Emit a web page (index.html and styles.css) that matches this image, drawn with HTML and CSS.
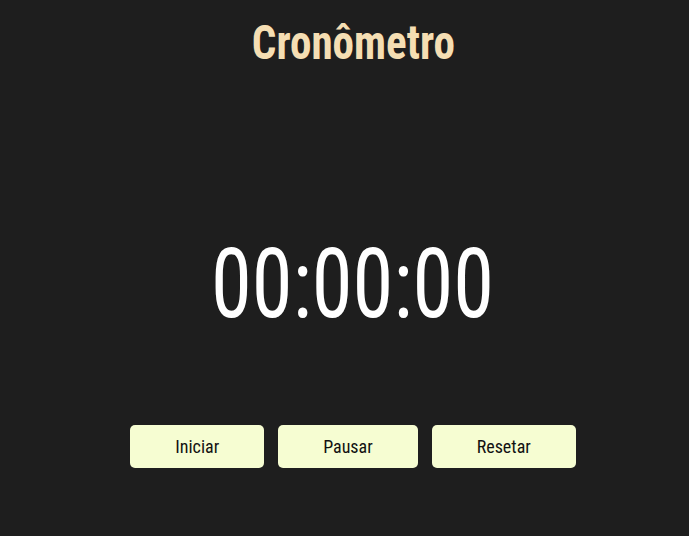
FILE: index.html
```html
<!DOCTYPE html>
<html lang="pt-BR">
<head>
<meta charset="utf-8">
<title>Cronômetro</title>
<link rel="stylesheet" href="styles.css">
</head>
<body>
<main class="app">
  <h1 class="title">Cronômetro</h1>
  <div class="timer"><span class="timer-text">00:00:00</span></div>
  <div class="controls">
    <button class="btn">Iniciar</button>
    <button class="btn">Pausar</button>
    <button class="btn">Resetar</button>
  </div>
</main>
</body>
</html>
```
FILE: styles.css
```css
html, body {
  margin: 0;
  height: 100%;
  background: #1e1e1e;
}
.app {
  display: flex;
  flex-direction: column;
  align-items: center;
  padding: 18px 0 0 17px;
  font-family: "Roboto Condensed", "Roboto", sans-serif;
}
.title {
  margin: 0;
  font-size: 49px;
  line-height: 1;
  font-weight: 700;
  color: #f5deb3;
  transform: scaleX(0.88);
}
.timer {
  margin-top: 169px;
  height: 96px;
  display: flex;
  justify-content: center;
}
.timer-text {
  display: inline-block;
  font-size: 96px;
  line-height: 1;
  font-weight: 400;
  color: #ffffff;
  transform: scaleX(0.86);
}
.controls {
  margin-top: 93px;
  display: flex;
  gap: 14px;
}
.btn {
  height: 43px;
  padding: 0 45px;
  border: none;
  border-radius: 5px;
  background: #f6fdd2;
  color: #111;
  font-family: inherit;
  font-size: 18px;
  cursor: pointer;
}
```
